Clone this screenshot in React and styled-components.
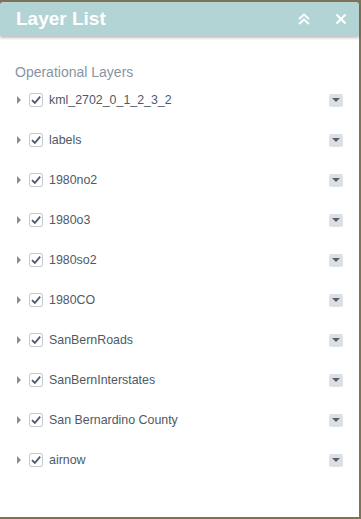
import React from 'react';
import styled, { createGlobalStyle } from 'styled-components';

const GlobalStyle = createGlobalStyle`
    html, body {
        margin: 0;
        padding: 0;
        background: #7d7356;
        font-family: "Liberation Sans", Arial, sans-serif;
    }
`;

const Panel = styled.div`
    width: 359px;
    height: 515px;
    margin-top: 2px;
    background: #ffffff;
    border-radius: 4px 4px 0 0;
    display: flex;
    flex-direction: column;
`;

const Header = styled.div`
    height: 34px;
    background: #b2d4d5;
    border-radius: 4px 4px 0 0;
    box-shadow: 0 2px 3px rgba(0, 0, 0, 0.25);
    display: flex;
    align-items: center;
    padding: 0 10px 0 16px;
`;

const Title = styled.div`
    flex: 1;
    color: #ffffff;
    font-size: 19px;
    font-weight: bold;
`;

const HeaderButton = styled.div`
    width: 16px;
    height: 16px;
    display: flex;
    align-items: center;
    justify-content: center;
    margin-left: ${p => p.gap || 0}px;
`;

const Body = styled.div`
    padding: 28px 15px 0 15px;
`;

const Section = styled.div`
    color: #8894a3;
    font-size: 14px;
    margin-bottom: 13px;
`;

const Row = styled.div`
    height: 40px;
    display: flex;
    align-items: flex-start;
`;

const Line = styled.div`
    height: 14px;
    display: flex;
    align-items: center;
    width: 100%;
`;

const Expander = styled.div`
    width: 0;
    height: 0;
    margin-left: 2px;
    border-left: 4px solid #8c8c8c;
    border-top: 4px solid transparent;
    border-bottom: 4px solid transparent;
`;

const Check = styled.div`
    width: 12px;
    height: 12px;
    margin-left: 8px;
    border: 1px solid #c5ccd4;
    border-radius: 2px;
    display: flex;
    align-items: center;
    justify-content: center;
`;

const Label = styled.div`
    flex: 1;
    margin-left: 6px;
    color: #4e5966;
    font-size: 12.4px;
`;

const Menu = styled.div`
    width: 14px;
    height: 13px;
    margin-right: 1px;
    background: #dcdfe3;
    border-radius: 2px;
    display: flex;
    align-items: center;
    justify-content: center;
    &::after {
        content: '';
        width: 0;
        height: 0;
        border-top: 4px solid #5a5f66;
        border-left: 4px solid transparent;
        border-right: 4px solid transparent;
    }
`;

const layers = [
    'kml_2702_0_1_2_3_2',
    'labels',
    '1980no2',
    '1980o3',
    '1980so2',
    '1980CO',
    'SanBernRoads',
    'SanBernInterstates',
    'San Bernardino County',
    'airnow',
];

const Tick = () => (
    <svg width="12" height="12" viewBox="0 0 12 12">
        <path d="M2 6.2 L4.8 9 L10.2 2.6" fill="none" stroke="#4b5a6e" strokeWidth="1.8" />
    </svg>
);

const App = () => {
    return (
        <>
            <GlobalStyle />
            <Panel>
                <Header>
                    <Title>Layer List</Title>
                    <HeaderButton>
                        <svg width="14" height="14" viewBox="0 0 14 14">
                            <path d="M2 7 L7 2.5 L12 7 M2 12 L7 7.5 L12 12" fill="none" stroke="#ffffff" strokeWidth="2" />
                        </svg>
                    </HeaderButton>
                    <HeaderButton gap={21}>
                        <svg width="12" height="12" viewBox="0 0 12 12">
                            <path d="M1.5 1.5 L10.5 10.5 M10.5 1.5 L1.5 10.5" fill="none" stroke="#ffffff" strokeWidth="2.2" />
                        </svg>
                    </HeaderButton>
                </Header>
                <Body>
                    <Section>Operational Layers</Section>
                    {layers.map(name => (
                        <Row key={name}>
                            <Line>
                                <Expander />
                                <Check><Tick /></Check>
                                <Label>{name}</Label>
                                <Menu />
                            </Line>
                        </Row>
                    ))}
                </Body>
            </Panel>
        </>
    );
};

export default App;
